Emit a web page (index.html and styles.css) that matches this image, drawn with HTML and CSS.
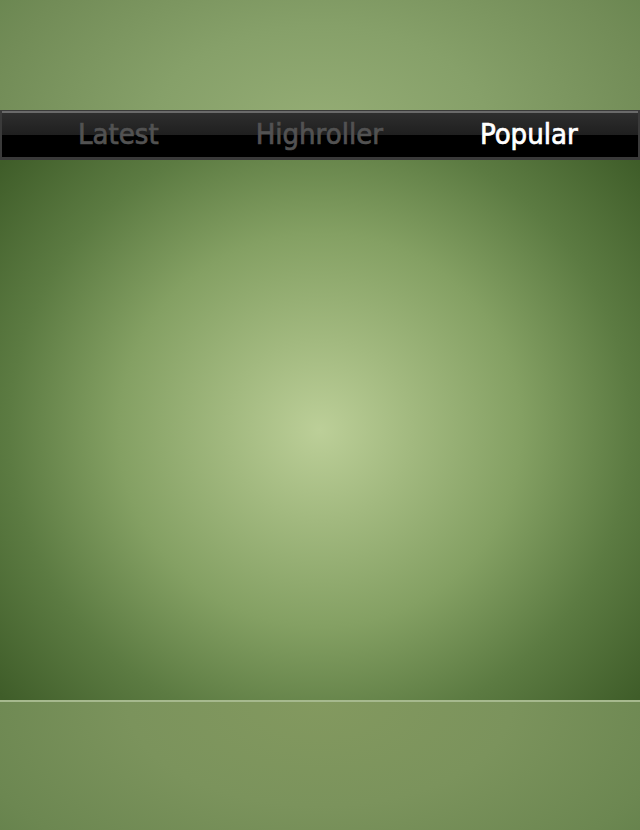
FILE: index.html
```html
<!DOCTYPE html>
<html>
<head>
<meta charset="utf-8">
<link rel="stylesheet" href="styles.css">
</head>
<body>
<div class="app">
  <header class="top"></header>
  <nav class="tabs">
    <div class="tabs-inner">
      <span class="tab">Latest</span>
      <span class="tab">Highroller</span>
      <span class="tab active">Popular</span>
    </div>
  </nav>
  <main class="stage"></main>
  <footer class="bottom"></footer>
</div>
</body>
</html>
```
FILE: styles.css
```css
html, body {
  margin: 0;
  padding: 0;
}
body {
  width: 640px;
  height: 830px;
  overflow: hidden;
  font-family: "DejaVu Sans Condensed", "DejaVu Sans", sans-serif;
}
.app {
  display: flex;
  flex-direction: column;
  height: 830px;
}
.top {
  height: 110px;
  background: radial-gradient(ellipse 420px 260px at 320px 130px, #95ad75 0%, #86a069 40%, #728c57 80%, #66834d 100%);
}
.tabs {
  height: 50px;
  box-sizing: border-box;
  background: #3a3a3a;
  padding: 1px 2px 3px 2px;
}
.tabs-inner {
  height: 100%;
  box-sizing: border-box;
  border-top: 2px solid #6a6a6a;
  background: linear-gradient(to bottom, #2e2e2e 0%, #1f1f1f 50%, #000 50%, #000 100%);
  display: flex;
  align-items: center;
  gap: 97px;
  padding-left: 76px;
}
.tab {
  font-size: 29px;
  line-height: 1;
  color: #525252;
  -webkit-text-stroke: 0.7px #525252;
  margin-top: -2px;
}
.tab.active {
  color: #ffffff;
  -webkit-text-stroke: 0.7px #ffffff;
}
.stage {
  height: 540px;
  background: radial-gradient(ellipse 420px 410px at 320px 270px, #bccf98 0%, #a2b97f 22%, #84a063 48%, #5c7b42 74%, #3f5d29 100%);
}
.bottom {
  flex: 1;
  border-top: 2px solid #a6b98e;
  background: radial-gradient(ellipse 480px 260px at 320px 0px, #83995f 0%, #7b935c 40%, #6c8751 75%, #5d7b46 100%);
}
```
